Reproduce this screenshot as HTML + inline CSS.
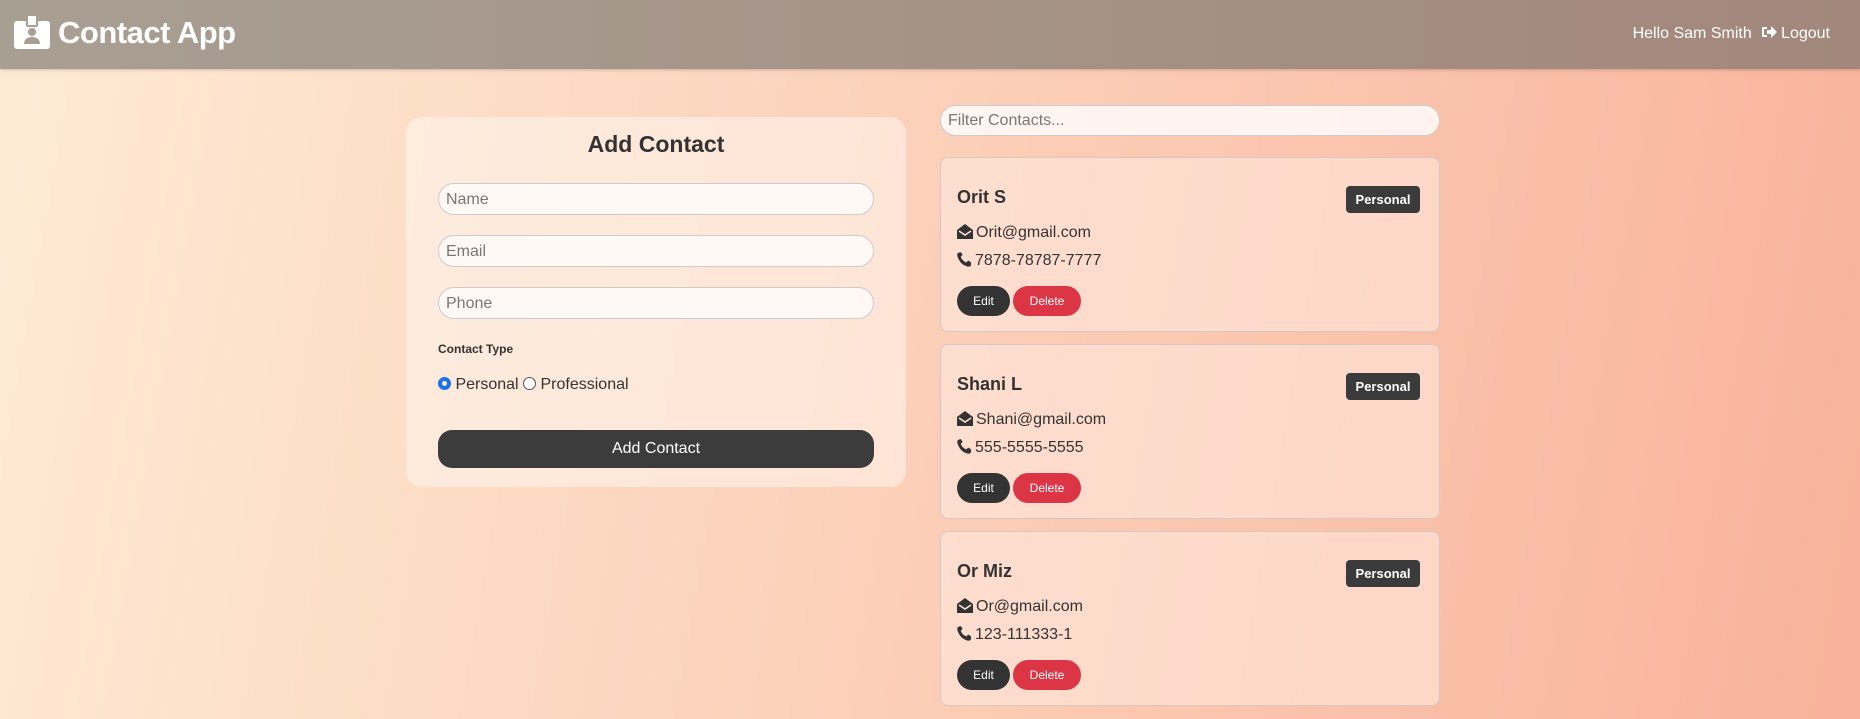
<!DOCTYPE html>
<html><head><style>
*{box-sizing:border-box;margin:0;padding:0}
body{width:1860px;height:719px;overflow:hidden;font-family:"Liberation Sans",sans-serif;background:linear-gradient(100deg,#feebd5 0%,#fcd2bb 45%,#f9b29b 100%);position:relative;color:#333}
.nav{position:absolute;left:0;top:0;width:1860px;height:69px;background:linear-gradient(90deg,#a89f93,#a3877c);box-shadow:0 1px 3px rgba(0,0,0,.2)}
.logo{position:absolute;left:58px;top:15px;font-size:31px;font-weight:bold;color:#fff;letter-spacing:-0.5px}
.right{position:absolute;right:30px;top:25px;font-size:16px;color:#fff}
.abs{position:absolute}
.card{position:absolute;left:406px;top:117px;width:500px;height:370px;border-radius:16px;background:rgba(255,245,238,.55)}
.in{position:absolute;left:438px;width:436px;height:32px;border:1px solid #ccc;border-radius:16px;background:rgba(255,252,250,.85);font-size:16px;color:#777;padding:7px 7px}
.cc{position:absolute;left:940px;width:500px;height:175px;border:1px solid #d6c9c2;border-radius:8px;background:rgba(255,235,225,.55)}
.nm{position:absolute;left:16px;top:29px;font-size:18px;font-weight:bold;color:#333}
.badge{position:absolute;left:405px;top:28px;width:74px;height:27px;background:#3b3b3b;color:#fff;border-radius:4px;font-size:13px;font-weight:bold;text-align:center;line-height:27px}
.ln{position:absolute;left:16px;font-size:16px;color:#333}
.ln svg{vertical-align:-2px;margin-right:3px}
.btn{position:absolute;top:128px;height:30px;border-radius:15px;color:#fff;font-size:12px;text-align:center;line-height:30px}
</style></head><body>
<div class="nav">
<svg class="abs" style="left:14px;top:15px" width="36" height="34" viewBox="0 0 36 34"><rect x="0" y="6" width="36" height="28" rx="3" fill="#fff"/><rect x="13" y="0" width="10" height="11" rx="1" fill="#fff" stroke="#a89f93" stroke-width="2"/><circle cx="18" cy="17" r="4" fill="#a89f93"/><path d="M10 29c0-5 4-7 8-7s8 2 8 7z" fill="#a89f93"/></svg>
<div class="logo">Contact App</div>
<div class="right">Hello Sam Smith &nbsp;<svg width="16" height="14" viewBox="0 0 16 14" style="vertical-align:-1px"><path d="M1 2h5v2H3v6h3v2H1z" fill="#fff"/><path d="M6 5h4V1l6 6-6 6V9H6z" fill="#fff"/></svg> Logout</div>
</div>
<div class="card"></div>
<div class="abs" style="left:406px;width:500px;top:131px;text-align:center;font-size:23px;font-weight:bold;color:#333">Add Contact</div>
<div class="in" style="top:183px">Name</div>
<div class="in" style="top:235px">Email</div>
<div class="in" style="top:287px">Phone</div>
<div class="abs" style="left:438px;top:342px;font-size:12px;font-weight:bold">Contact Type</div>
<div class="abs" style="left:438px;top:376px;font-size:16px"><span style="display:inline-block;width:13px;height:13px;border-radius:50%;border:4px solid #1a73e8;vertical-align:-1px"></span> Personal <span style="display:inline-block;width:13px;height:13px;border-radius:50%;border:1px solid #555;background:#fff;vertical-align:-1px"></span> Professional</div>
<div class="abs" style="left:438px;top:430px;width:436px;height:38px;border-radius:14px;background:#3c3c3c;color:#fff;text-align:center;line-height:38px;font-size:16px">Add Contact</div>
<div class="in" style="left:940px;top:105px;width:500px;height:31px;padding:6px 7px">Filter Contacts...</div>

<div class="cc" style="top:157px">
<div class="nm">Orit S</div><div class="badge">Personal</div>
<div class="ln" style="top:66px"><svg width="16" height="15" viewBox="0 0 16 15"><path d="M0 6L8 0l8 6v9H0z" fill="#333"/><path d="M2 7l6 4 6-4" fill="none" stroke="#fbe0d3" stroke-width="1.6"/></svg>Orit@gmail.com</div>
<div class="ln" style="top:94px"><svg width="15" height="15" viewBox="0 0 16 16"><path d="M15 11l-3-2-2 2c-3-1-5-3-6-6l2-2-2-3L1 1C0 2 0 4 1 6c2 5 5 8 9 9 2 1 4 1 5-1z" fill="#333"/></svg>7878-78787-7777</div>
<div class="btn" style="left:16px;width:53px;background:#333">Edit</div>
<div class="btn" style="left:72px;width:68px;background:#dc3545">Delete</div>
</div>
<div class="cc" style="top:344px">
<div class="nm">Shani L</div><div class="badge">Personal</div>
<div class="ln" style="top:66px"><svg width="16" height="15" viewBox="0 0 16 15"><path d="M0 6L8 0l8 6v9H0z" fill="#333"/><path d="M2 7l6 4 6-4" fill="none" stroke="#fbe0d3" stroke-width="1.6"/></svg>Shani@gmail.com</div>
<div class="ln" style="top:94px"><svg width="15" height="15" viewBox="0 0 16 16"><path d="M15 11l-3-2-2 2c-3-1-5-3-6-6l2-2-2-3L1 1C0 2 0 4 1 6c2 5 5 8 9 9 2 1 4 1 5-1z" fill="#333"/></svg>555-5555-5555</div>
<div class="btn" style="left:16px;width:53px;background:#333">Edit</div>
<div class="btn" style="left:72px;width:68px;background:#dc3545">Delete</div>
</div>
<div class="cc" style="top:531px">
<div class="nm">Or Miz</div><div class="badge">Personal</div>
<div class="ln" style="top:66px"><svg width="16" height="15" viewBox="0 0 16 15"><path d="M0 6L8 0l8 6v9H0z" fill="#333"/><path d="M2 7l6 4 6-4" fill="none" stroke="#fbe0d3" stroke-width="1.6"/></svg>Or@gmail.com</div>
<div class="ln" style="top:94px"><svg width="15" height="15" viewBox="0 0 16 16"><path d="M15 11l-3-2-2 2c-3-1-5-3-6-6l2-2-2-3L1 1C0 2 0 4 1 6c2 5 5 8 9 9 2 1 4 1 5-1z" fill="#333"/></svg>123-111333-1</div>
<div class="btn" style="left:16px;width:53px;background:#333">Edit</div>
<div class="btn" style="left:72px;width:68px;background:#dc3545">Delete</div>
</div>
</body></html>
